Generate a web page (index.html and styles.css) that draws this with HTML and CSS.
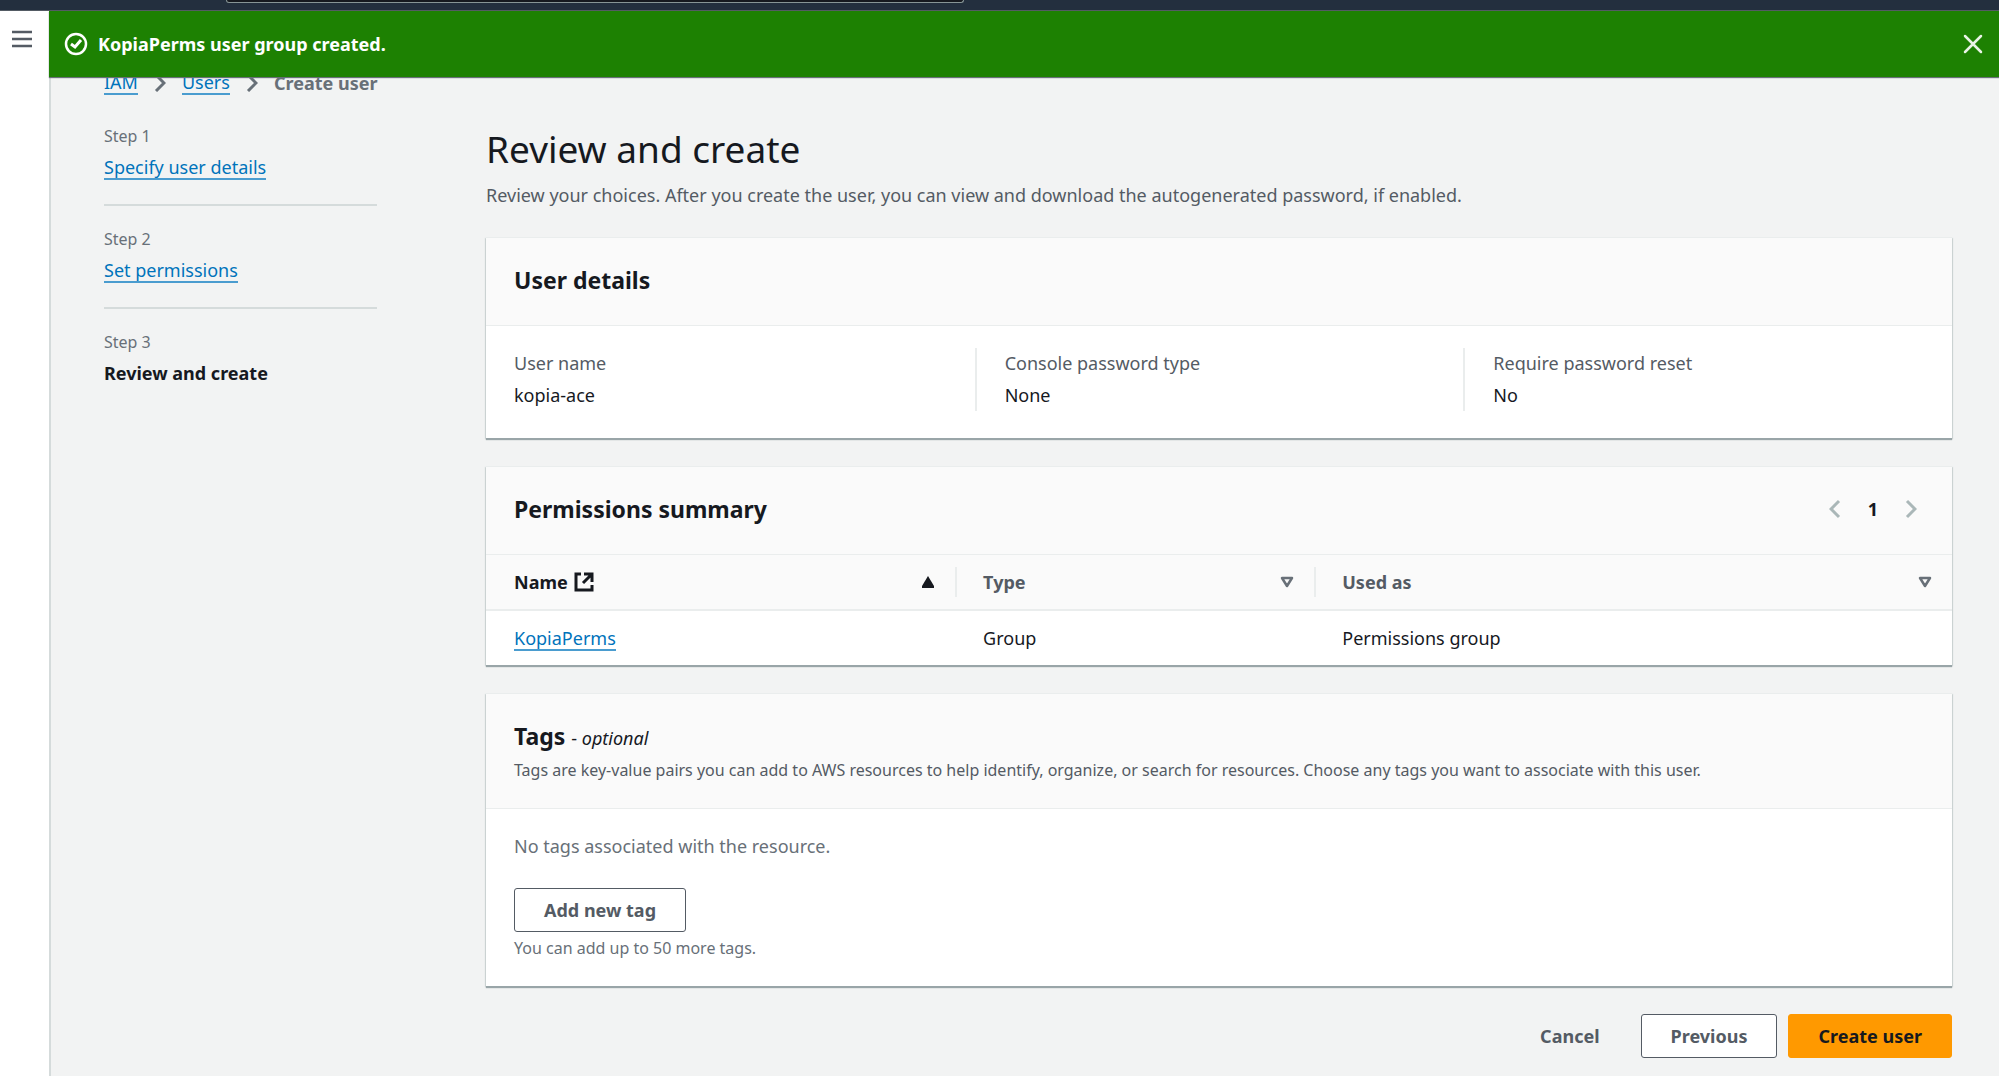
FILE: index.html
```html
<!doctype html>
<html lang="en">
<head>
  <meta charset="UTF-8">
  <meta name="viewport" content="width=device-width, initial-scale=1.0">
  <title>Create user | IAM</title>
  <link rel="stylesheet" href="styles.css">
</head>
<body>
  <header class="top-nav">
    <div class="top-search"></div>
  </header>

  <div class="layout">
    <aside class="side-rail">
      <button class="icon-btn" aria-label="Open navigation">
        <svg width="20" height="18" viewBox="0 0 20 18" fill="none" stroke="#545b64" stroke-width="2.5">
          <path d="M0 2h20M0 9h20M0 16h20"/>
        </svg>
      </button>
    </aside>

    <div class="content">
      <div class="flash" role="status">
        <svg width="24" height="24" viewBox="0 0 24 24" fill="none" stroke="#fff" stroke-width="2.5">
          <circle cx="12" cy="12" r="10"/>
          <path d="M7 12l4 3 6-7" stroke-width="3"/>
        </svg>
        <span class="flash-text">KopiaPerms user group created.</span>
        <button class="icon-btn" aria-label="Dismiss">
          <svg width="20" height="20" viewBox="0 0 20 20" fill="none" stroke="#e9f3e6" stroke-width="2.5" stroke-linecap="round">
            <path d="M2 2l16 16M18 2L2 18"/>
          </svg>
        </button>
      </div>

      <nav class="breadcrumbs" aria-label="Breadcrumbs">
        <a href="#">IAM</a>
        <svg width="12" height="18" viewBox="0 0 12 18" fill="none" stroke="#687078" stroke-width="3"><path d="M2 1l8 8-8 8"/></svg>
        <a href="#">Users</a>
        <svg width="12" height="18" viewBox="0 0 12 18" fill="none" stroke="#687078" stroke-width="3"><path d="M2 1l8 8-8 8"/></svg>
        <span class="current">Create user</span>
      </nav>

      <div class="wizard">
        <ol class="steps">
          <li>
            <span class="step-label">Step 1</span>
            <a href="#">Specify user details</a>
          </li>
          <li>
            <span class="step-label">Step 2</span>
            <a href="#">Set permissions</a>
          </li>
          <li>
            <span class="step-label">Step 3</span>
            <strong>Review and create</strong>
          </li>
        </ol>

        <main>
          <h1>Review and create</h1>
          <p class="subtitle">Review your choices. After you create the user, you can view and download the autogenerated password, if enabled.</p>

          <section class="panel">
            <div class="panel-header">
              <h2>User details</h2>
            </div>
            <dl class="details">
              <div>
                <dt>User name</dt>
                <dd>kopia-ace</dd>
              </div>
              <div>
                <dt>Console password type</dt>
                <dd>None</dd>
              </div>
              <div>
                <dt>Require password reset</dt>
                <dd>No</dd>
              </div>
            </dl>
          </section>

          <section class="panel">
            <div class="panel-header">
              <h2>Permissions summary</h2>
              <div class="pagination">
                <button class="icon-btn" aria-label="Previous page" disabled>
                  <svg width="12" height="20" viewBox="0 0 12 20" fill="none" stroke="#aab7b8" stroke-width="3"><path d="M10 2l-8 8 8 8"/></svg>
                </button>
                <span class="page-number">1</span>
                <button class="icon-btn" aria-label="Next page" disabled>
                  <svg width="12" height="20" viewBox="0 0 12 20" fill="none" stroke="#aab7b8" stroke-width="3"><path d="M2 2l8 8-8 8"/></svg>
                </button>
              </div>
            </div>
            <table>
              <thead>
                <tr>
                  <th class="col-name sorted">
                    <div class="th-inner">
                      <span>Name</span>
                      <svg width="20" height="20" viewBox="0 0 20 20" fill="none" stroke="#16191f" stroke-width="3">
                        <path d="M7 2H2v16h16v-5M10 2h8v8M18 2l-9 9"/>
                      </svg>
                      <svg class="sort" width="14" height="12" viewBox="0 0 14 12" fill="#16191f"><path d="M7 0l6 10v2H1v-2z"/></svg>
                    </div>
                  </th>
                  <th class="col-type">
                    <div class="th-inner">
                      <span>Type</span>
                      <svg class="sort" width="14" height="12" viewBox="0 0 14 12" fill="none" stroke="#687078" stroke-width="2.5" stroke-linejoin="round"><path d="M2 2h10l-5 8z"/></svg>
                    </div>
                  </th>
                  <th>
                    <div class="th-inner">
                      <span>Used as</span>
                      <svg class="sort" width="14" height="12" viewBox="0 0 14 12" fill="none" stroke="#687078" stroke-width="2.5" stroke-linejoin="round"><path d="M2 2h10l-5 8z"/></svg>
                    </div>
                  </th>
                </tr>
              </thead>
              <tbody>
                <tr>
                  <td><a href="#">KopiaPerms</a></td>
                  <td>Group</td>
                  <td>Permissions group</td>
                </tr>
              </tbody>
            </table>
          </section>

          <section class="panel">
            <div class="panel-header">
              <div>
                <h2>Tags <span class="optional">- <em>optional</em></span></h2>
                <p class="panel-desc">Tags are key-value pairs you can add to AWS resources to help identify, organize, or search for resources. Choose any tags you want to associate with this user.</p>
              </div>
            </div>
            <div class="tags-body">
              <p class="empty">No tags associated with the resource.</p>
              <button class="btn">Add new tag</button>
              <p class="hint">You can add up to 50 more tags.</p>
            </div>
          </section>

          <div class="actions">
            <button class="btn btn-link">Cancel</button>
            <button class="btn">Previous</button>
            <button class="btn btn-primary">Create user</button>
          </div>
        </main>
      </div>
    </div>
  </div>
</body>
</html>
```
FILE: styles.css
```css
* {
  box-sizing: border-box;
}

body {
  margin: 0;
  font-family: "Noto Sans", "Open Sans", sans-serif;
  font-size: 18px;
  line-height: 28px;
  color: #16191f;
  background: #f2f3f3;
  min-height: 100vh;
  display: flex;
  flex-direction: column;
}

h1, h2, p, ol, dl, dd {
  margin: 0;
  padding: 0;
}

a {
  color: #0073bb;
  text-decoration: none;
  border-bottom: 2px solid #4a9ccf;
  line-height: 22px;
  display: inline-block;
}

svg {
  display: block;
  flex: none;
}

.icon-btn {
  background: none;
  border: none;
  padding: 0;
  cursor: pointer;
}

/* top bar */
.top-nav {
  height: 11px;
  background: #232f3e;
  border-bottom: 1px solid #545b64;
}

.top-search {
  width: 738px;
  height: 3px;
  margin-left: 226px;
  background: #16191f;
  border: 1px solid #879596;
  border-top: none;
  border-radius: 0 0 3px 3px;
}

.layout {
  flex: 1;
  display: flex;
}

.side-rail {
  width: 51px;
  background: #fff;
  border-right: 2px solid #d5dbdb;
  padding: 16px 12px;
}

.content {
  flex: 1;
  position: relative;
  padding: 58px 47px 0 53px;
}

/* success message stays over the page */
.flash {
  position: absolute;
  top: 0;
  left: -2px;
  right: 0;
  height: 66px;
  display: flex;
  align-items: center;
  gap: 10px;
  padding: 0 16px 0 15px;
  background: #1d8102;
  color: #fff;
  font-weight: 700;
  box-shadow: 0 1px 1px #687078;
}

.flash-text {
  flex: 1;
}

.breadcrumbs {
  display: flex;
  align-items: center;
  gap: 16px;
}

.breadcrumbs .current {
  color: #687078;
  font-weight: 700;
}

.wizard {
  display: grid;
  grid-template-columns: 273px 1fr;
  gap: 109px;
  padding-top: 25px;
}

.steps {
  list-style: none;
}

.steps li {
  height: 103px;
}

.steps li + li {
  border-top: 2px solid #d5dbdb;
  padding-top: 19px;
}

.steps li:first-child {
  height: 82px;
}

.step-label {
  display: block;
  font-size: 16px;
  color: #687078;
  margin-bottom: 3px;
}

h1 {
  font-size: 37px;
  font-weight: 400;
  line-height: 44px;
  margin-top: 5px;
}

.subtitle {
  color: #545b64;
  margin: 10px 0 28px;
}

/* panels */
.panel {
  background: #fff;
  margin-bottom: 28px;
  border-top: 1px solid #eaeded;
  box-shadow: 0 2px 1px #99a5a8, 1px 1px 1px #d5dbdb, -1px 1px 1px #d5dbdb;
}

.panel-header {
  display: flex;
  align-items: center;
  justify-content: space-between;
  background: #fafafa;
  border-bottom: 1px solid #eaeded;
  padding: 27px 28px 30px;
}

h2 {
  font-size: 23px;
  line-height: 30px;
  font-weight: 700;
}

.details {
  display: grid;
  grid-template-columns: repeat(3, 1fr);
  padding: 22px 0 27px;
}

.details div {
  padding: 1px 28px 2px;
}

.details div + div {
  border-left: 2px solid #eaeded;
}

dt {
  color: #545b64;
  margin-bottom: 4px;
}

.pagination {
  display: flex;
  align-items: center;
  gap: 27px;
  padding-right: 7px;
}

.page-number {
  font-weight: 700;
}

table {
  width: 100%;
  table-layout: fixed;
  border-collapse: collapse;
}

.col-name {
  width: 32%;
}

.col-type {
  width: 24.5%;
}

th {
  background: #fafafa;
  border-bottom: 2px solid #eaeded;
  color: #545b64;
  text-align: left;
  padding: 12px 0;
}

th.sorted {
  color: #16191f;
}

.th-inner {
  display: flex;
  align-items: center;
  gap: 6px;
  height: 30px;
  padding: 0 20px 0 28px;
}

th + th .th-inner {
  padding-left: 26px;
  border-left: 2px solid #eaeded;
}

.sort {
  margin-left: auto;
}

td {
  padding: 13px 28px;
}

.optional {
  font-size: 18px;
  font-weight: 400;
}

.panel-desc {
  font-size: 16px;
  line-height: 24px;
  color: #545b64;
  margin: 5px 0 -4px;
}

.tags-body {
  padding: 23px 28px 24px;
}

.empty {
  color: #687078;
  margin-bottom: 28px;
}

.hint {
  font-size: 16px;
  line-height: 24px;
  color: #687078;
  margin: 4px 0 2px;
}

.btn {
  height: 44px;
  padding: 0 29px;
  font-family: inherit;
  font-size: 18px;
  font-weight: 700;
  color: #545b64;
  background: #fff;
  border: 1px solid #545b64;
  border-radius: 3px;
  cursor: pointer;
}

.btn-link {
  background: none;
  border-color: transparent;
}

.btn-primary {
  color: #16191f;
  background: #ff9900;
  border-color: #ff9900;
}

.actions {
  display: flex;
  justify-content: flex-end;
  gap: 11px;
}
```
